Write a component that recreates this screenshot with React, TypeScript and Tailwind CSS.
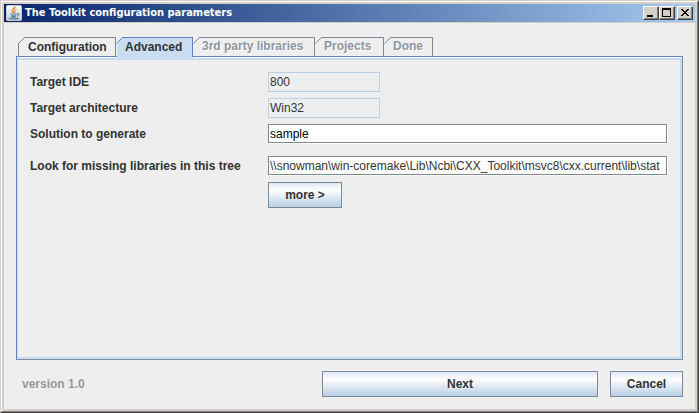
import { useState } from "react";
import type { ReactNode } from "react";

type Tab = { name: string; width: string; state: "normal" | "selected" | "disabled" };

const tabs: Tab[] = [
  { name: "Configuration", width: "w-[98px]", state: "normal" },
  { name: "Advanced", width: "w-[77px]", state: "selected" },
  { name: "3rd party libraries", width: "w-[122px]", state: "disabled" },
  { name: "Projects", width: "w-[69px]", state: "disabled" },
  { name: "Done", width: "w-[49px]", state: "disabled" },
];

function JavaIcon() {
  return (
    <svg width="16" height="16" viewBox="0 0 16 16" aria-hidden="true">
      <defs>
        <linearGradient id="cupTile" x1="0" y1="0" x2="0" y2="1">
          <stop offset="0" stopColor="#ffffff" />
          <stop offset="1" stopColor="#c4ccd4" />
        </linearGradient>
      </defs>
      <rect x="0.5" y="0.5" width="15" height="15" rx="1" fill="url(#cupTile)" stroke="#c3c8d0" />
      <path d="M8.8 1.5C9.4 3.4 6 4 6.4 5.8C6.6 6.8 7.4 7 7.6 8" fill="none" stroke="#e8762c" strokeWidth="1.5" />
      <path d="M10.6 4C8.6 4.8 8.2 5.6 9 6.4C9.4 7 9.2 7.5 8.8 8" fill="none" stroke="#f09040" strokeWidth="1.2" />
      <path d="M4.2 9H10.6M5 10.8H10M5.4 12.2H9.6" stroke="#5382a1" strokeWidth="1.2" />
      <path d="M11 8.6C13.4 8.2 13.2 10.6 10.8 11.2" fill="none" stroke="#5382a1" strokeWidth="1.1" />
      <path d="M3 12.8C3.4 14.2 11.4 14.4 12.6 13" fill="none" stroke="#5382a1" strokeWidth="1.2" />
    </svg>
  );
}

function CaptionButton({ label, children }: { label: string; children: ReactNode }) {
  return (
    <button
      type="button"
      aria-label={label}
      className="h-[14px] w-[16px] border border-t-white border-l-white border-r-[#404040] border-b-[#404040] bg-[#d4d0c8] shadow-[inset_-1px_-1px_0_#808080]"
    >
      <svg width="14" height="12" viewBox="0 0 14 12" shapeRendering="crispEdges" aria-hidden="true">
        {children}
      </svg>
    </button>
  );
}

function TabButton({ tab, first }: { tab: Tab; first: boolean }) {
  const selected = tab.state === "selected";
  const line = selected ? "#6382bf" : "#7a8a99";
  return (
    <button
      type="button"
      role="tab"
      aria-selected={selected}
      disabled={tab.state === "disabled"}
      className={`flex items-start ${selected ? "h-[20px]" : "h-[19px]"} ${tab.width}`}
    >
      <svg width="6" height="21" viewBox="0 0 6 21" className="shrink-0" aria-hidden="true">
        {selected && <path d="M1 21V6L6 1V21Z" fill="#c8ddf2" />}
        <path d="M0.5 6.5L6 1" fill="none" stroke={line} />
        {first && <path d="M0.5 6V19" stroke={line} />}
      </svg>
      <span
        className={`h-full grow border-t border-r text-left whitespace-nowrap ${first ? "pl-1" : "pl-[3px]"} ${
          selected
            ? "border-t-[#6382bf] border-r-[#6382bf] bg-[#c8ddf2] leading-[18px] text-[#333333] shadow-[0_1px_0_#c8ddf2]"
            : tab.state === "disabled"
              ? "border-[#7a8a99] leading-[16px] text-[#8a96a2] [text-shadow:1px_1px_0_#ffffff]"
              : "border-[#7a8a99] leading-[18px] text-[#333333]"
        }`}
      >
        {tab.name}
      </span>
    </button>
  );
}

function MetalButton({ className, children }: { className: string; children: ReactNode }) {
  return (
    <button
      type="button"
      className={`h-[26px] border border-[#7a8a99] bg-linear-to-b from-[#dde8f3] via-white via-30% to-[#b8cfe5] text-[#333333] ${className}`}
    >
      {children}
    </button>
  );
}

const disabledField = "h-[20px] w-[112px] border border-[#b8cfe5] px-px font-normal text-[#333333]";
const field =
  "h-[19px] w-full border border-[#7a8a99] bg-white pl-px font-normal shadow-[1px_1px_0_#ffffff]";

export default function App() {
  const [solution, setSolution] = useState("sample");
  const [path, setPath] = useState(
    "\\\\snowman\\win-coremake\\Lib\\Ncbi\\CXX_Toolkit\\msvc8\\cxx.current\\lib\\stat",
  );

  return (
    <div className="flex min-h-screen flex-col border border-t-[#d4d0c8] border-r-[#404040] border-b-[#404040] border-l-[#d4d0c8] font-['Liberation_Sans',Arial,sans-serif] text-[12px] font-bold">
      <div className="flex grow flex-col border border-t-white border-r-[#808080] border-b-[#808080] border-l-white">
        <div className="flex grow flex-col border-2 border-[#d4d0c8] bg-[#eeeeee]">
          <header className="flex h-[19px] items-center border-b border-[#d4d0c8] bg-linear-to-r from-[#0a246a] to-[#a6caf0] px-[2px]">
            <JavaIcon />
            <h1 className="grow pl-[3px] font-['DejaVu_Sans_Condensed','DejaVu_Sans',sans-serif] text-[11px] leading-[18px] text-white">
              The Toolkit configuration parameters
            </h1>
            <CaptionButton label="Minimize">
              <path d="M3 8H9V10H3Z" />
            </CaptionButton>
            <CaptionButton label="Maximize">
              <path fillRule="evenodd" d="M2 1H11V10H2ZM3 3V9H10V3Z" />
            </CaptionButton>
            <div className="ml-[2px] flex">
              <CaptionButton label="Close">
                <path d="M3 2H5V3H6V4H8V3H9V2H11V3H10V4H9V5H8V6H9V7H10V8H11V9H9V8H8V7H6V8H5V9H3V8H4V7H5V6H6V5H5V4H4V3H3Z" />
              </CaptionButton>
            </div>
          </header>

          <main className="flex grow flex-col px-3 pt-[14px]">
            <div role="tablist" className="z-10 -mb-px flex h-[20px] items-start pl-[2px]">
              {tabs.map((tab, i) => (
                <TabButton key={tab.name} tab={tab} first={i === 0} />
              ))}
            </div>

            <section className="flex grow flex-col border border-t-[#6382bf] border-r-[#7a8a99] border-b-[#7a8a99] border-l-[#6382bf]">
              <div className="flex grow flex-col border-t border-white">
                <div className="grow border-t-2 border-r-2 border-b-2 border-l border-[#c8ddf2] pt-3 pr-[13px] pl-3 text-[#333333]">
                  <div className="grid grid-cols-[238px_1fr] items-center gap-y-[6px]">
                    <label htmlFor="ide">Target IDE</label>
                    <input id="ide" className={disabledField} value="800" readOnly />
                    <label htmlFor="arch">Target architecture</label>
                    <input id="arch" className={disabledField} value="Win32" readOnly />
                    <label htmlFor="solution">Solution to generate</label>
                    <input
                      id="solution"
                      className={`${field} text-black`}
                      value={solution}
                      onChange={(e) => setSolution(e.target.value)}
                    />
                  </div>
                  <div className="mt-[13px] grid grid-cols-[238px_1fr] items-center gap-y-[7px]">
                    <label htmlFor="tree">Look for missing libraries in this tree</label>
                    <input
                      id="tree"
                      className={field}
                      value={path}
                      onChange={(e) => setPath(e.target.value)}
                    />
                    <MetalButton className="col-start-2 w-[74px]">more &gt;</MetalButton>
                  </div>
                </div>
              </div>
            </section>

            <footer className="flex items-center gap-3 pt-[11px] pb-3">
              <span className="w-[294px] shrink-0 pl-[6px] text-[#999999]">version 1.0</span>
              <MetalButton className="grow">Next</MetalButton>
              <MetalButton className="w-[73px]">Cancel</MetalButton>
            </footer>
          </main>
        </div>
      </div>
    </div>
  );
}
